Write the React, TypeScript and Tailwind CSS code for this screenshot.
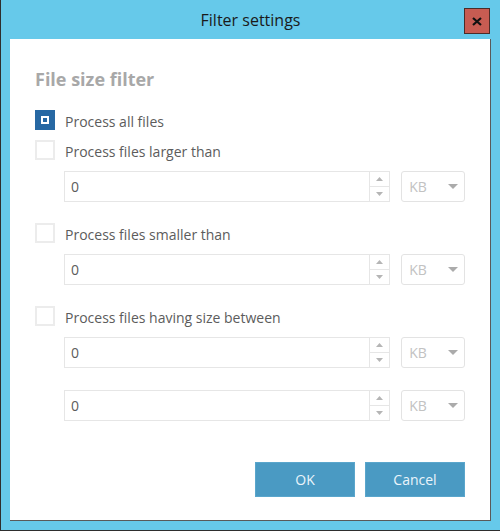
import React from "react";

function CheckBox({ checked }: { checked?: boolean }) {
  return checked ? (
    <div className="flex h-[20px] w-[20px] shrink-0 items-center justify-center bg-[#2768a3]">
      <div className="flex h-[8px] w-[8px] items-center justify-center bg-white">
        <div className="h-[4px] w-[4px] bg-[#2768a3]" />
      </div>
    </div>
  ) : (
    <div className="h-[20px] w-[20px] shrink-0 border-2 border-[#ececec] bg-white" />
  );
}

function Option({ label, checked, className }: { label: string; checked?: boolean; className?: string }) {
  return (
    <div className={"flex h-[20px] items-center gap-[10px] " + (className || "")}>
      <CheckBox checked={checked} />
      <span className="h-[20px] text-[14px] leading-[23px] text-[#5c5c5c]">{label}</span>
    </div>
  );
}

function SizeInput({ className }: { className?: string }) {
  return (
    <div className={"ml-[29px] flex h-[31px] items-stretch " + (className || "")}>
      {/* number field */}
      <div className="flex w-[306px] items-center border border-r-0 border-[#e6e6e6] bg-white pl-[6px] text-[14px] text-[#5c5c5c]">
        0
      </div>
      {/* spinner */}
      <div className="flex w-[21px] flex-col border border-[#e6e6e6]">
        <div className="flex flex-1 items-center justify-center border-b border-[#e6e6e6]">
          <svg width="7" height="4" viewBox="0 0 7 4">
            <path d="M0 4 L3.5 0 L7 4 Z" fill="#b5b5b5" />
          </svg>
        </div>
        <div className="flex flex-1 items-center justify-center">
          <svg width="7" height="4" viewBox="0 0 7 4">
            <path d="M0 0 L3.5 4 L7 0 Z" fill="#b5b5b5" />
          </svg>
        </div>
      </div>
      {/* unit dropdown */}
      <div className="ml-[11px] flex w-[64px] items-center justify-between rounded-[3px] border border-[#e3e3e3] pl-[7px] pr-[6px]">
        <span className="text-[14px] text-[#c2c2c2]">KB</span>
        <svg width="10" height="5" viewBox="0 0 10 5">
          <path d="M0 0 L5 5 L10 0 Z" fill="#ababab" />
        </svg>
      </div>
    </div>
  );
}

export default function App() {
  return (
    <div className="flex h-[531px] w-[500px] flex-col border-b border-l border-[#2e2e2e] bg-[#66c9ea] font-['Open_Sans','Noto_Sans',sans-serif]">
      {/* Title bar */}
      <div className="relative flex h-[39px] shrink-0 items-center justify-center">
        <span className="text-[16px] text-[#1a1a1a]">Filter settings</span>
        <button className="absolute right-[10px] top-[8px] flex h-[26px] w-[26px] items-center justify-center border border-[#4b2c28] bg-[#c75c52]">
          <svg width="10" height="9" viewBox="0 0 10 9">
            <path d="M1 1 L9 8 M9 1 L1 8" stroke="#111" strokeWidth="2.2" />
          </svg>
        </button>
      </div>

      {/* Client area */}
      <div className="ml-[9px] flex h-[482px] w-[481px] flex-col border-b border-r border-[#5a5a5a] bg-white pl-[25px] pr-[25px]">
        <h2 className="mt-[28px] text-[18px] font-bold leading-[24px] text-[#a8a8a8]">File size filter</h2>

        <Option className="mt-[19px]" label="Process all files" checked />
        <Option className="mt-[10px]" label="Process files larger than" />
        <SizeInput className="mt-[11px]" />

        <Option className="mt-[21px]" label="Process files smaller than" />
        <SizeInput className="mt-[11px]" />

        <Option className="mt-[21px]" label="Process files having size between" />
        <SizeInput className="mt-[11px]" />
        <SizeInput className="mt-[22px]" />

        <div className="mt-[41px] flex justify-end gap-[10px]">
          <button className="h-[35px] w-[100px] border border-[#5aa6cc] bg-[#4a9ac3] text-[14px] text-[#eaf5fb]">OK</button>
          <button className="h-[35px] w-[100px] border border-[#5aa6cc] bg-[#4a9ac3] text-[14px] text-[#eaf5fb]">Cancel</button>
        </div>
      </div>
    </div>
  );
}
